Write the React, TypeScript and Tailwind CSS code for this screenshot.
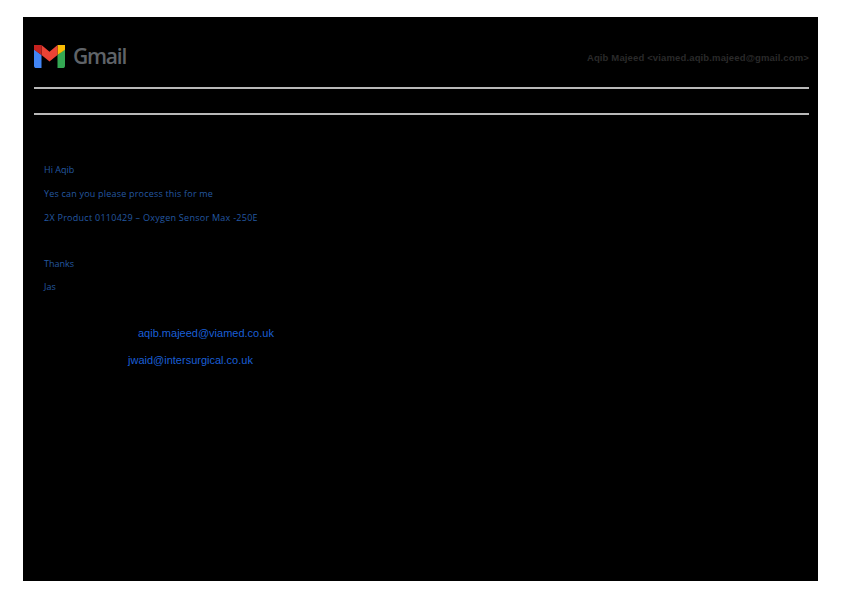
const GmailMark = () => (
  <svg width="31" height="24" viewBox="0 0 31 23" preserveAspectRatio="none">
    <path d="M0 5v15.500A2.500 2.500 0 0 0 2.500 23H7.500V10.500z" fill="#4285f4" />
    <path d="M23.500 10.500V23h5a2.500 2.500 0 0 0 2.500-2.500V5z" fill="#34a853" />
    <path d="M23.500 1v9.500L31 5.500V1z" fill="#fbbc04" />
    <path d="M7.500 10.500V1l8 6.500 8-6.500v9.500l-8 6.200z" fill="#ea4335" />
    <path d="M0 1v4.500l7.500 5V1z" fill="#c5221f" />
  </svg>
);

const App = () => {
  return (
    <div className="w-[842px] h-[595px] bg-white pt-[17px] pl-[23px] overflow-hidden">
      <div className="w-[795px] h-[564px] bg-black pl-[11px] pr-[9px] pt-[27px] font-['Liberation_Sans',sans-serif]">
        <div className="flex items-center justify-between h-[26px]">
          <div className="flex items-center gap-[8px] -mt-[2px]">
            <GmailMark />
            <span className="font-['Open_Sans',sans-serif] text-[21px] leading-[26px] font-semibold tracking-[-1.2px] text-[#5f6368]">
              Gmail
            </span>
          </div>
          <span className="mt-[2px] text-[9.500px] leading-[12px] font-bold tracking-[0.14px] text-[#2a2a2a]">
            Aqib Majeed &lt;viamed.aqib.majeed@gmail.com&gt;
          </span>
        </div>

        <div className="mt-[17px] h-[28px] border-y-2 border-y-[#b8b8b8]" />

        <div className="mt-[49px] pl-[10px] font-['Open_Sans',sans-serif] text-[9px] leading-[12px] font-medium text-[#2458a0]">
          <p>Hi Aqib</p>
          <p className="mt-[12px] tracking-[0.2px]">Yes can you please process this for me</p>
          <p className="mt-[12px] tracking-[0.27px]">2X Product 0110429 – Oxygen Sensor Max -250E</p>
          <p className="mt-[34px]">Thanks</p>
          <p className="mt-[11px]">Jas</p>
        </div>

        <div className="mt-[34px] text-[11px] leading-[13px] text-[#1a5fd6]">
          <p className="pl-[104px]">aqib.majeed@viamed.co.uk</p>
          <p className="mt-[14px] pl-[94px]">jwaid@intersurgical.co.uk</p>
        </div>
      </div>
    </div>
  );
};

export default App;
